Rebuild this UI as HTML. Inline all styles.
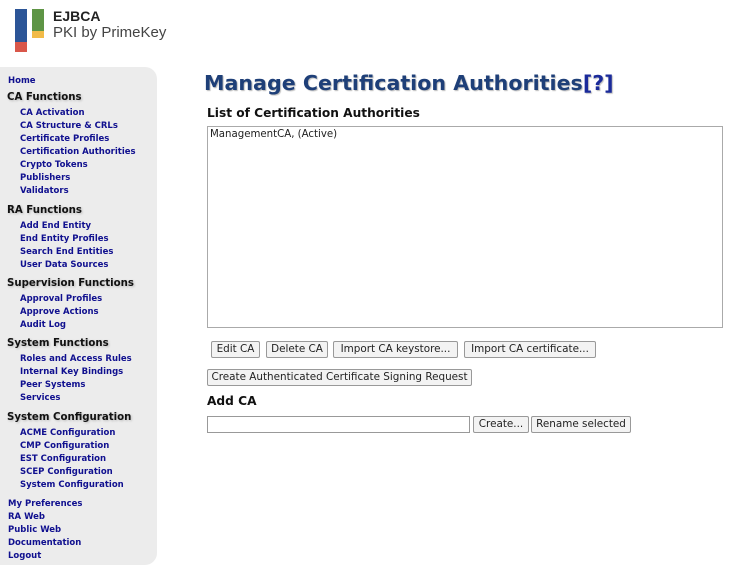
<!DOCTYPE html>
<html><head><meta charset="utf-8"><style>
*{margin:0;padding:0;box-sizing:border-box}
body{width:739px;height:568px;background:#fff;position:relative;overflow:hidden;font-family:"DejaVu Sans","Liberation Sans",sans-serif}
.a{position:absolute;white-space:nowrap}
.side{position:absolute;left:0;top:67px;width:157px;height:498px;background:#ececec;border-radius:0 12px 12px 0}
.l{position:absolute;white-space:nowrap;font-weight:bold;font-size:8.5px;color:#10108f;line-height:12px}
.h{position:absolute;white-space:nowrap;font-weight:bold;font-size:10.2px;color:#111;line-height:14px;text-shadow:1px 1px 2px #bbb}
.btn{position:absolute;height:17px;border:1px solid #999;background:#f3f3f3;font-size:10.4px;line-height:15px;text-align:center;color:#222;border-radius:2px}
</style></head><body>
<div class="a" style="left:15px;top:9px;width:12px;height:33px;background:#2c5597"></div>
<div class="a" style="left:15px;top:42px;width:12px;height:10px;background:#d9574a"></div>
<div class="a" style="left:32px;top:9px;width:12px;height:22px;background:#5e9545"></div>
<div class="a" style="left:32px;top:31px;width:12px;height:7px;background:#f2bb48"></div>
<div class="a" style="left:53px;top:8px;font-family:'Liberation Sans',sans-serif;font-size:14px;font-weight:bold;color:#222">EJBCA</div>
<div class="a" style="left:53px;top:24px;font-family:'Liberation Sans',sans-serif;font-size:15px;color:#444">PKI by PrimeKey</div>
<div class="side"></div>
<div class="l" style="left:8px;top:75px">Home</div>
<div class="h" style="left:7px;top:91px">CA Functions</div>
<div class="l" style="left:20px;top:107px">CA Activation</div>
<div class="l" style="left:20px;top:120px">CA Structure &amp; CRLs</div>
<div class="l" style="left:20px;top:133px">Certificate Profiles</div>
<div class="l" style="left:20px;top:146px">Certification Authorities</div>
<div class="l" style="left:20px;top:159px">Crypto Tokens</div>
<div class="l" style="left:20px;top:172px">Publishers</div>
<div class="l" style="left:20px;top:185px">Validators</div>
<div class="h" style="left:7px;top:204px">RA Functions</div>
<div class="l" style="left:20px;top:220px">Add End Entity</div>
<div class="l" style="left:20px;top:233px">End Entity Profiles</div>
<div class="l" style="left:20px;top:246px">Search End Entities</div>
<div class="l" style="left:20px;top:259px">User Data Sources</div>
<div class="h" style="left:7px;top:277px">Supervision Functions</div>
<div class="l" style="left:20px;top:293px">Approval Profiles</div>
<div class="l" style="left:20px;top:306px">Approve Actions</div>
<div class="l" style="left:20px;top:319px">Audit Log</div>
<div class="h" style="left:7px;top:337px">System Functions</div>
<div class="l" style="left:20px;top:353px">Roles and Access Rules</div>
<div class="l" style="left:20px;top:366px">Internal Key Bindings</div>
<div class="l" style="left:20px;top:379px">Peer Systems</div>
<div class="l" style="left:20px;top:392px">Services</div>
<div class="h" style="left:7px;top:411px">System Configuration</div>
<div class="l" style="left:20px;top:427px">ACME Configuration</div>
<div class="l" style="left:20px;top:440px">CMP Configuration</div>
<div class="l" style="left:20px;top:453px">EST Configuration</div>
<div class="l" style="left:20px;top:466px">SCEP Configuration</div>
<div class="l" style="left:20px;top:479px">System Configuration</div>
<div class="l" style="left:8px;top:498px">My Preferences</div>
<div class="l" style="left:8px;top:511px">RA Web</div>
<div class="l" style="left:8px;top:524px">Public Web</div>
<div class="l" style="left:8px;top:537px">Documentation</div>
<div class="l" style="left:8px;top:550px">Logout</div>

<div class="a" style="left:204px;top:71px;font-size:20.6px;font-weight:bold;color:#1e3f78;text-shadow:1px 1px 1px #bbb">Manage Certification Authorities<span style="color:#1a2a9a">[?]</span></div>
<div class="a" style="left:207px;top:106px;font-size:12.2px;font-weight:bold;color:#111">List of Certification Authorities</div>
<div class="a" style="left:207px;top:126px;width:516px;height:202px;border:1px solid #aaa;font-size:10.2px;color:#222;padding:2px 2px">ManagementCA, (Active)</div>
<div class="btn" style="left:211px;top:341px;width:49px">Edit CA</div>
<div class="btn" style="left:266px;top:341px;width:62px">Delete CA</div>
<div class="btn" style="left:333px;top:341px;width:125px">Import CA keystore...</div>
<div class="btn" style="left:464px;top:341px;width:132px">Import CA certificate...</div>
<div class="btn" style="left:207px;top:369px;width:265px">Create Authenticated Certificate Signing Request</div>
<div class="a" style="left:207px;top:394px;font-size:12.2px;font-weight:bold;color:#111">Add CA</div>
<div class="a" style="left:207px;top:416px;width:263px;height:17px;border:1px solid #999;background:#fff"></div>
<div class="btn" style="left:473px;top:416px;width:56px">Create...</div>
<div class="btn" style="left:531px;top:416px;width:100px">Rename selected</div>
</body></html>
